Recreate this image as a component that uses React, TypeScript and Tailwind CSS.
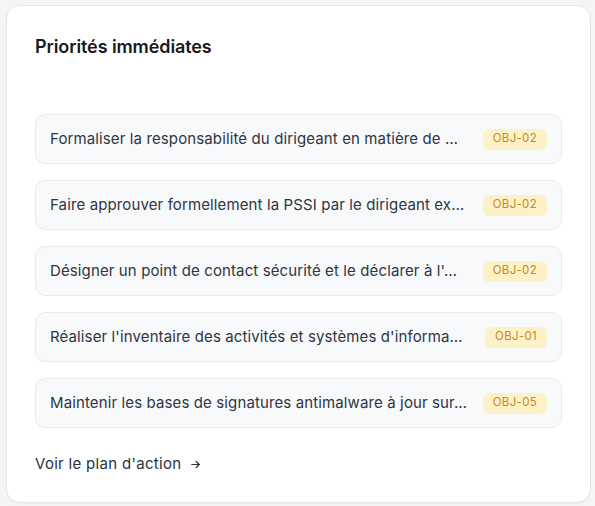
import React from "react";

const items = [
  { text: "Formaliser la responsabilité du dirigeant en matière de …", tag: "OBJ-02" },
  { text: "Faire approuver formellement la PSSI par le dirigeant ex…", tag: "OBJ-02" },
  { text: "Désigner un point de contact sécurité et le déclarer à l'…", tag: "OBJ-02" },
  { text: "Réaliser l'inventaire des activités et systèmes d'informa…", tag: "OBJ-01" },
  { text: "Maintenir les bases de signatures antimalware à jour sur…", tag: "OBJ-05" },
];

export default function App() {
  return (
    <div
      className="w-[595px] h-[506px] bg-[#f4f5f7] pt-[5px] pl-[6px]"
      style={{ fontFamily: "Inter, 'Noto Sans', sans-serif" }}
    >
      <div className="w-[585px] h-[498px] bg-white rounded-[14px] border border-[#e4e6ea] shadow-[0_1px_2px_rgba(0,0,0,0.04)] px-7 pt-[27px]">
        <h2 className="text-[18px] leading-[28px] font-semibold text-[#161a23] tracking-[-0.1px]">
          Priorités immédiates
        </h2>
        <div className="mt-[53px] flex flex-col gap-4">
          {items.map((it, i) => (
            <div
              key={i}
              className="h-[50px] flex items-center gap-3 rounded-[10px] border border-[#e8eaee] bg-[#f8f9fb] pl-[14px] pr-[14px]"
            >
              <span className="flex-1 min-w-0 truncate text-[15px] text-[#2f3542] tracking-[0.12px]">
                {it.text}
              </span>
              <span className="shrink-0 h-[21px] flex items-center rounded-md bg-[#fdf1c8] px-[10px] text-[11.5px] text-[#c8891e] tracking-[0.3px]">
                {it.tag}
              </span>
            </div>
          ))}
        </div>
        <div className="mt-[26px] flex items-center gap-2 text-[15px] leading-5 text-[#2a3140] tracking-[0.3px]">
          <span>Voir le plan d'action</span>
          <svg width="13" height="13" viewBox="0 0 24 24" fill="none" stroke="#2a3140" strokeWidth="2" strokeLinecap="round" strokeLinejoin="round">
            <path d="M5 12h14" />
            <path d="M13 6l6 6-6 6" />
          </svg>
        </div>
      </div>
    </div>
  );
}
